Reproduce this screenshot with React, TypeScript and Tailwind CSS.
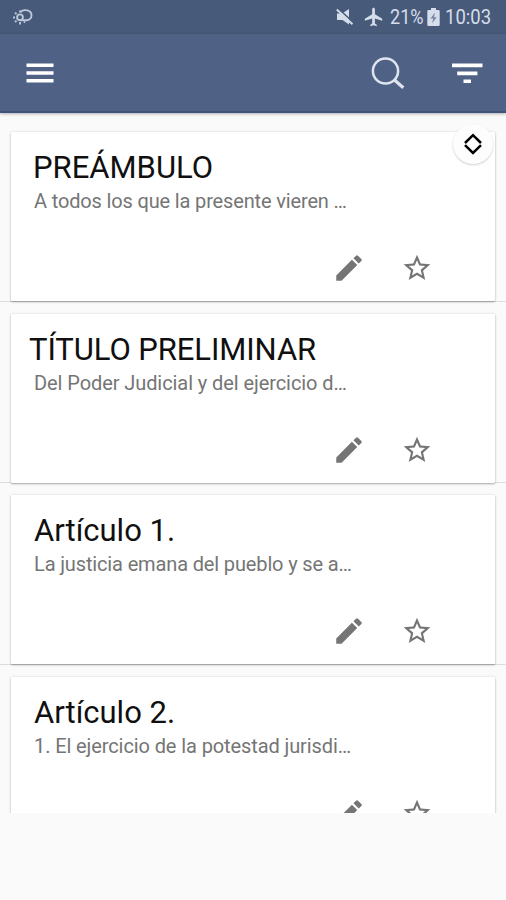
interface Article {
  title: string;
  excerpt: string;
  titleClass: string;
  excerptClass: string;
}

const articles: Article[] = [
  {
    title: "PREÁMBULO",
    excerpt: "A todos los que la presente vieren …",
    titleClass: "pl-[22px]",
    excerptClass: "tracking-[-0.15px]",
  },
  {
    title: "TÍTULO PRELIMINAR",
    excerpt: "Del Poder Judicial y del ejercicio d…",
    titleClass: "pl-[18px] tracking-[-0.08px]",
    excerptClass: "tracking-[-0.08px]",
  },
  {
    title: "Artículo 1.",
    excerpt: "La justicia emana del pueblo y se a…",
    titleClass: "pl-[23px]",
    excerptClass: "tracking-[-0.14px]",
  },
  {
    title: "Artículo 2.",
    excerpt: "1. El ejercicio de la potestad jurisdi…",
    titleClass: "pl-[23px]",
    excerptClass: "tracking-[-0.1px]",
  },
];

function StatusBar() {
  return (
    <div className="flex h-[34px] items-center bg-[#475a7a] text-[#d5ddea]">
      <svg className="ml-3 h-[17px] w-[21px]" viewBox="0 0 21 17" fill="none" stroke="#bcc8da" strokeWidth="1.9">
        <path d="M8.500 3.400C9.500 1.600 11.500 1 13.500 1.100c3.700.200 6 2.300 6 5.100 0 3-2.200 5-5 5H8.500" />
        <circle cx="8" cy="8.300" r="2.900" />
        <path d="M8 1.500v2M3 3.600l1.500 1.500M1 8.500h2M3 13.200l1.500-1.500M8 13v2.500M12 12.500l1 1.200" />
      </svg>
      <div className="flex-1" />
      <svg className="h-[18px] w-[18px]" viewBox="0 0 18 18" fill="currentColor">
        <path d="M1 5.500h5L13 1v15.500L6.500 12H1z" />
        <path d="M1.800.2 18 15.200" stroke="#475a7a" strokeWidth="1.600" />
        <path d="M.8 1.500 16.500 16.300" stroke="currentColor" strokeWidth="1.900" />
      </svg>
      <svg className="ml-[9px] h-[22px] w-[22px]" viewBox="0 0 24 24" fill="currentColor">
        <path d="M21 16v-2l-8-5V3.500c0-.83-.67-1.500-1.500-1.500S10 2.670 10 3.500V9l-8 5v2l8-2.500V19l-2 1.500V22l3.500-1 3.500 1v-1.500L13 19v-5.500l8 2.500z" />
      </svg>
      <span className="ml-[5px] w-[36px] origin-left scale-x-[0.86] text-[21px] leading-[36px] whitespace-nowrap">21%</span>
      <svg className="ml-[1px] h-[18px] w-[13px]" viewBox="0 0 13 18">
        <path d="M4 0h5v2h2.500a1.200 1.200 0 0 1 1.200 1.200v13.500a1.200 1.200 0 0 1-1.200 1.200h-10A1.200 1.200 0 0 1 .3 16.700V3.200A1.200 1.200 0 0 1 1.500 2H4z" fill="currentColor" />
        <path d="M8 4.500 3.500 10.500h2.800L5 15.500l4.700-6.300H7z" fill="#7787a0" />
      </svg>
      <span className="ml-[5px] w-[61px] origin-left scale-x-[0.88] text-[21px] leading-[36px] whitespace-nowrap">10:03</span>
    </div>
  );
}

function Toolbar() {
  return (
    <header className="relative flex h-[79px] items-center border-b-2 border-[#3f547c] bg-[#4f6185] shadow-[0_1px_3px_rgba(0,0,0,0.3)]">
      <button className="ml-[26px]" aria-label="Menú">
        <svg className="h-[22px] w-[28px]" viewBox="0 0 28 22" fill="#fff">
          <path d="M.5 1.500h27v3.500H.5zM.5 9.300h27v3.500H.5zM.5 17.100h27v3.500H.5z" />
        </svg>
      </button>
      <div className="flex-1" />
      <button aria-label="Buscar">
        <svg className="h-[34px] w-[36px]" viewBox="0 0 36 34" fill="none" stroke="#dfe5ef">
          <circle cx="15.500" cy="15" r="12.600" strokeWidth="2.500" />
          <path d="m24.500 24 8.800 7.800" strokeWidth="3.200" />
        </svg>
      </button>
      <button className="mr-[22px] ml-[45px]" aria-label="Filtrar">
        <svg className="h-[22px] w-[33px]" viewBox="0 0 33 22" fill="#fff">
          <path d="M1 1.500h30.500v3.800H1zM6.200 9.500h20.200v3.700H6.200zM12.500 17.500h7.500V21h-7.500z" />
        </svg>
      </button>
    </header>
  );
}

function ArticleCard({ article }: { article: Article }) {
  return (
    <li className="h-[181.5px] shrink-0 border-b border-[#dcdcdc] px-[11px] pt-[12px]">
      <article className="flex h-[169px] flex-col rounded-[1px] bg-white pt-[16px] shadow-[0_1px_2px_rgba(0,0,0,0.3),0_0_3px_rgba(0,0,0,0.1)]">
        <h2 className={`text-[31px] leading-[40px] whitespace-nowrap text-[#101010] ${article.titleClass}`}>
          {article.title}
        </h2>
        <p className={`pl-[23px] text-[20px] leading-[27px] whitespace-nowrap text-[#757575] ${article.excerptClass}`}>
          {article.excerpt}
        </p>
        <div className="mt-auto mr-[62px] mb-[16px] flex items-center justify-end gap-[35px] text-[#757575]">
          <button aria-label="Editar">
            <svg className="size-[34px]" viewBox="0 0 24 24" fill="currentColor">
              <path d="M3 17.250V21h3.750L17.810 9.940l-3.750-3.750L3 17.250zM20.710 7.040a.996.996 0 0 0 0-1.410l-2.340-2.340a.996.996 0 0 0-1.410 0l-1.830 1.830 3.750 3.750 1.830-1.830z" />
            </svg>
          </button>
          <button aria-label="Favorito">
            <svg className="size-[32px]" viewBox="0 0 24 24" fill="currentColor">
              <path d="m22 9.240-7.190-.62L12 2 9.190 8.630 2 9.240l5.460 4.730L5.820 21 12 17.270 18.180 21l-1.630-7.030L22 9.240zM12 15.400l-3.760 2.270 1-4.280-3.320-2.880 4.380-.38L12 6.100l1.710 4.040 4.380.38-3.320 2.880 1 4.280L12 15.400z" />
            </svg>
          </button>
        </div>
      </article>
    </li>
  );
}

export default function App() {
  return (
    <div className="relative h-[900px] w-[506px] overflow-hidden bg-[#fafafa] font-['Roboto',sans-serif]">
      <StatusBar />
      <Toolbar />
      <main className="h-[700px] overflow-hidden pt-[7px]">
        <ul className="flex flex-col">
          {articles.map((article) => (
            <ArticleCard key={article.title} article={article} />
          ))}
        </ul>
      </main>
      <button
        aria-label="Desplegar"
        className="absolute top-[124px] left-[453px] flex size-[40px] items-center justify-center rounded-full bg-[#fdfdfd] shadow-[0_1px_2px_rgba(0,0,0,0.2)]"
      >
        <svg className="h-[22px] w-[20px]" viewBox="0 0 20 22" fill="none" stroke="#000" strokeWidth="2.500">
          <path d="m2 10 8-7.800 8 7.800M2 12.200l8 7.800 8-7.800" />
        </svg>
      </button>
    </div>
  );
}
